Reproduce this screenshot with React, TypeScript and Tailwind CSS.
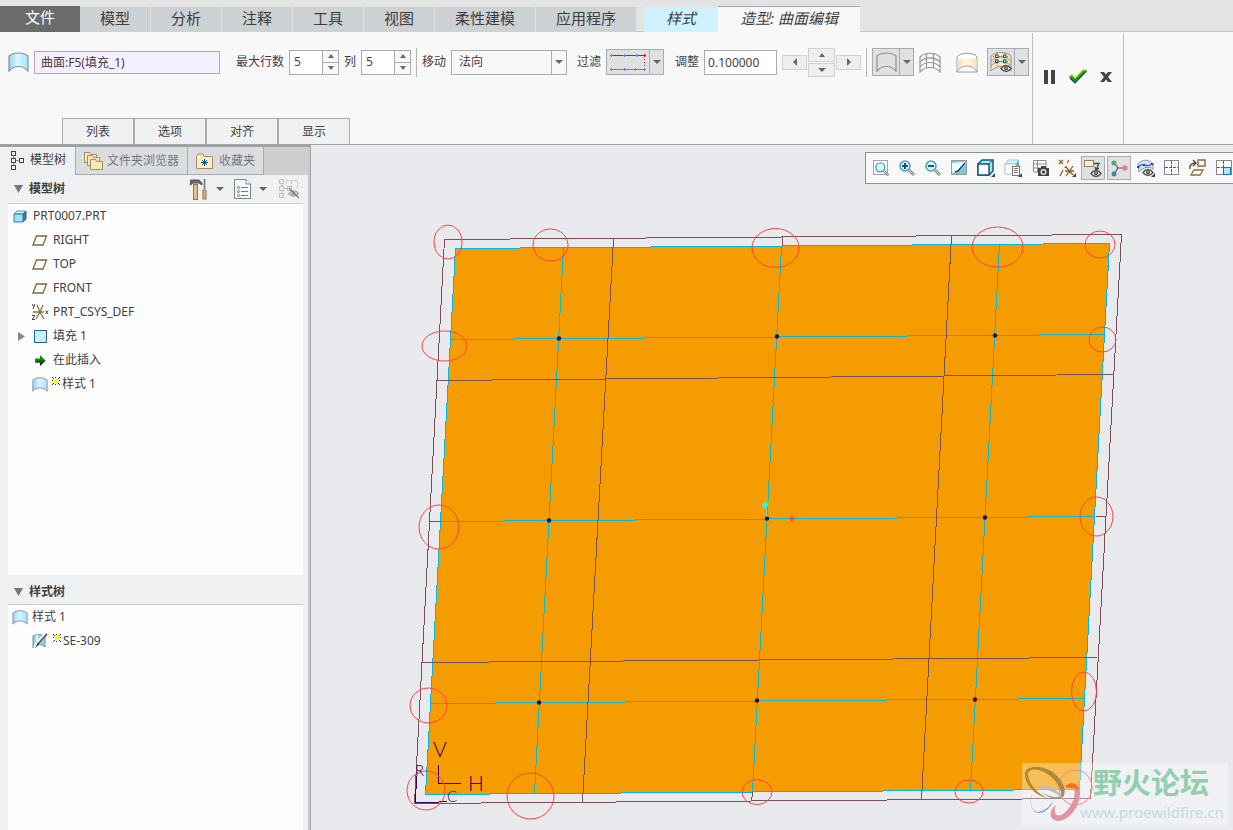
import React, { useState } from "react";

type IconProps = { className?: string };

const SurfaceIcon: React.FC<IconProps & { variant?: "blue" | "plain" }> = ({ className = "w-[21px] h-[20px]", variant = "blue" }) => (
  <svg viewBox="0 0 21 20" className={className}>
    <defs>
      <linearGradient id="surfaceBlue" x1="0" x2="1">
        <stop offset="0" stopColor="#8fd6f2" />
        <stop offset="0.45" stopColor="#d9f6ff" />
        <stop offset="1" stopColor="#a2e4fb" />
      </linearGradient>
    </defs>
    <path
      d="M1 4 C6 0 15 0 20 4 V19 C15 13 6 13 1 19 Z"
      fill={variant === "blue" ? "url(#surfaceBlue)" : "none"}
      stroke="#8b9196"
      strokeWidth="1.2"
    />
  </svg>
);

const MeshIcon: React.FC<IconProps> = ({ className = "w-[22px] h-[21px]" }) => (
  <svg viewBox="0 0 22 21" className={className} fill="none" stroke="#93979b" strokeWidth="1.2">
    <path d="M1 5 C6 0 16 0 21 5 V20 C16 14 6 14 1 20 Z" />
    <path d="M1 10 C6 4.500 16 4.500 21 10 M1 15 C6 9 16 9 21 15 M7.500 2 V16 M14.500 2 V16" />
  </svg>
);

const ShadedIcon = () => (
  <svg viewBox="0 0 22 21" className="w-[22px] h-[21px]">
    <defs>
      <linearGradient id="shaded" x1="0" x2="1">
        <stop offset="0" stopColor="#ffdcae" />
        <stop offset="0.4" stopColor="#fff6e8" />
        <stop offset="1" stopColor="#ffe0b5" />
      </linearGradient>
    </defs>
    <path d="M1 5 C4 0 18 0 21 5 V20 H1 Z" fill="#fff" stroke="#96999c" />
    <path d="M1.500 6 C6 7 16 7 20.500 6 V19 C16 12 6 12 1.500 19 Z" fill="url(#shaded)" />
    <path d="M1 20 C6 12 16 12 21 20" fill="none" stroke="#96999c" />
  </svg>
);

const Eye: React.FC<{ x: number; y: number }> = ({ x, y }) => (
  <g transform={`translate(${x} ${y})`}>
    <path d="M0 3.500 C3 -0.500 7 -0.500 10 3.500 C7 7.500 3 7.500 0 3.500 Z" fill="#eee" stroke="#555" strokeWidth="1.400" />
    <circle cx="5" cy="3.300" r="2" fill="#444" />
    <circle cx="5" cy="3" r="0.700" fill="#fff" />
  </g>
);

const ControlMeshIcon = () => (
  <svg viewBox="0 0 22 22" className="w-[22px] h-[22px]">
    <path d="M1 5 C6 0 16 0 21 5 V20 C16 14 6 14 1 20 Z" fill="#ffe3bb" stroke="#93979b" />
    <path d="M1 10 C6 4.500 16 4.500 21 10 M1 15 C6 9 16 9 21 15" fill="none" stroke="#93979b" />
    <path d="M7 2 V15 M15 2 V15 M3 5.500 H19 M3 10.500 H19" fill="none" stroke="#3a7d96" strokeDasharray="1 1" />
    {[[5.5, 4], [13.5, 4], [5.5, 9], [13.5, 9]].map(([x, y]) => (
      <rect key={`${x}-${y}`} x={x} y={y} width="2.500" height="2.500" fill="#c8f0ff" stroke="#0c5975" />
    ))}
    <Eye x={11} y={14} />
  </svg>
);

const FilterIcon = () => (
  <svg viewBox="0 0 38 18" className="w-[38px] h-[18px]" fill="none" shapeRendering="crispEdges">
    <path d="M2 2.500 H36" stroke="#f00" />
    <path d="M35.500 3 V17" stroke="#f00" strokeDasharray="1 2" />
    <path d="M2 16.500 H36" stroke="#6a78dc" />
    <path
      d="M1 2.500 h3 M2.500 1 v3 M14 2.500 h3 M15.500 1 v3 M26 2.500 h3 M27.500 1 v3 M1 16.500 h3 M2.500 15 v3 M14 16.500 h3 M15.500 15 v3 M25 16.500 h3 M26.500 15 v3 M34 16.500 h3 M35.500 15 v3"
      stroke="#6a78dc"
    />
    <path d="M34 2.500 h3 M35.500 1 v3" stroke="#f00" />
  </svg>
);

const Arrow: React.FC<{ dir: "up" | "down" | "left" | "right"; wide?: boolean }> = ({ dir, wide }) => {
  const paths = {
    up: "M1 6 L4 2 L7 6 Z",
    down: wide ? "M0 2 H8 L4 6 Z" : "M1 2 H7 L4 6 Z",
    left: "M6 0 V8 L2 4 Z",
    right: "M2 0 V8 L6 4 Z",
  };
  return (
    <svg viewBox="0 0 8 8" className="w-2 h-2 shrink-0">
      <path d={paths[dir]} fill="#666" />
    </svg>
  );
};

function Spinner({ label, id }: { label: string; id: string }) {
  const [value, setValue] = useState(5);
  return (
    <>
      <label htmlFor={id}>{label}</label>
      <div className="flex w-[50px] h-[25px] border border-[#a9abad] bg-white">
        <input
          id={id}
          className="w-0 grow pl-1 bg-white outline-none"
          value={value}
          onChange={(e) => setValue(Number(e.target.value) || 0)}
        />
        <div className="flex flex-col w-4 border-l border-[#a9abad] bg-[#f8f8f8]">
          <button aria-label={`${label} +`} className="flex-1 flex items-center justify-center border-b border-[#a9abad]" onClick={() => setValue(value + 1)}>
            <Arrow dir="up" />
          </button>
          <button aria-label={`${label} -`} className="flex-1 flex items-center justify-center" onClick={() => setValue(value - 1)}>
            <Arrow dir="down" />
          </button>
        </div>
      </div>
    </>
  );
}

function SplitButton({ label, children, className = "" }: { label: string; children: React.ReactNode; className?: string }) {
  return (
    <div className={`flex border border-[#a9abad] bg-[#dfe0e2] ${className}`}>
      <button aria-label={label} className="grow flex items-center justify-center">{children}</button>
      <button aria-label={`${label} ▾`} className="w-[14px] flex items-center justify-center border-l border-[#a9abad]">
        <Arrow dir="down" wide />
      </button>
    </div>
  );
}

const Separator = () => <div className="w-px h-[29px] bg-[#b5b7b9]" />;

const tabs = ["模型", "分析", "注释", "工具", "视图", "柔性建模", "应用程序"];
const panels = ["列表", "选项", "对齐", "显示"];

function TabBar() {
  return (
    <nav className="flex items-end h-8 shrink-0 bg-[#e3e3e3] text-[15px] leading-5 text-[#3d3d3d] [&_button]:pb-1">
      <button className="w-20 h-[26px] bg-[#6b6b6b] text-white">文件</button>
      <div className="flex gap-px">
        {tabs.map((tab) => (
          <button key={tab} className="h-[25px] px-5 bg-[#ccd1d4]">{tab}</button>
        ))}
      </div>
      <div className="w-2 h-px bg-[#c4c6c8]" />
      <button className="w-[74px] h-[25px] bg-[#d0f1ff] italic">样式</button>
      <button className="w-[142px] h-[26px] bg-[#f8f8f8] border-t border-[#a5a7a9] italic">造型: 曲面编辑</button>
      <div className="grow h-px bg-[#c4c6c8]" />
    </nav>
  );
}

function Ribbon() {
  return (
    <div className="flex shrink-0 h-[113px] bg-[#f8f8f8] border-b border-[#a0a2a2]">
      <div className="flex flex-col justify-between pt-[15px]">
        <div className="flex items-center gap-[5px] h-[30px] pl-2 pr-[3px] whitespace-nowrap">
          <SurfaceIcon />
          <input
            aria-label="曲面"
            className="w-[186px] h-[23px] px-[6px] mr-[11px] border border-[#a9abad] bg-[#f4f0ff] outline-none"
            defaultValue="曲面:F5(填充_1)"
          />
          <Spinner id="rows" label="最大行数" />
          <Spinner id="cols" label="列" />
          <Separator />
          <label htmlFor="move">移动</label>
          <div className="relative w-[116px] h-[25px] mr-[5px]">
            <select id="move" className="appearance-none w-full h-full pl-[7px] border border-[#a9abad] bg-[#f8f8f8] outline-none">
              <option>法向</option>
            </select>
            <div className="absolute right-px top-px bottom-px w-[15px] flex items-center justify-center border-l border-[#a9abad] pointer-events-none">
              <Arrow dir="down" wide />
            </div>
          </div>
          <span>过滤</span>
          <SplitButton label="过滤" className="w-[58px] h-[26px] mr-[6px]">
            <FilterIcon />
          </SplitButton>
          <label htmlFor="adjust">调整</label>
          <input id="adjust" className="w-[73px] h-[25px] pl-[3px] border border-[#a9abad] bg-white outline-none" defaultValue="0.100000" />
          <div className="flex items-center gap-px">
            <button aria-label="左" className="w-[25px] h-[15px] flex items-center justify-center border border-[#cfd1d2] bg-[#eceeef]"><Arrow dir="left" /></button>
            <div className="flex flex-col gap-px">
              <button aria-label="上" className="w-[27px] h-[14px] flex items-center justify-center border border-[#cfd1d2] bg-[#eceeef]"><Arrow dir="up" /></button>
              <button aria-label="下" className="w-[27px] h-[14px] flex items-center justify-center border border-[#cfd1d2] bg-[#eceeef]"><Arrow dir="down" wide /></button>
            </div>
            <button aria-label="右" className="w-[25px] h-[15px] flex items-center justify-center border border-[#cfd1d2] bg-[#eceeef]"><Arrow dir="right" /></button>
          </div>
          <Separator />
          <SplitButton label="曲面显示" className="w-[42px] h-[28px]">
            <SurfaceIcon variant="plain" />
          </SplitButton>
          <button aria-label="网格" className="mr-[10px]"><MeshIcon /></button>
          <button aria-label="着色" className="mr-1"><ShadedIcon /></button>
          <SplitButton label="控制网格" className="w-[42px] h-[28px]">
            <ControlMeshIcon />
          </SplitButton>
        </div>
        <div className="flex pl-[62px]">
          {panels.map((name) => (
            <button key={name} className="w-[72px] h-[26px] border border-b-0 border-[#a9abad] bg-[#eff1f3]">{name}</button>
          ))}
        </div>
      </div>
      <div className="flex items-center gap-3 mt-px px-[11px] pb-6 border-x border-[#bdbfc1]">
        <button aria-label="暂停">
          <svg viewBox="0 0 12 14" className="w-3 h-[14px]" fill="#444"><path d="M0 0 H4 V14 H0 Z M7 0 H11 V14 H7 Z" /></svg>
        </button>
        <button aria-label="确定">
          <svg viewBox="0 0 20 15" className="w-5 h-[15px]">
            <path d="M1 8 L4 6 L7 9 L15 1 H19 L7 14 Z" fill="#239050" />
            <path d="M1 7.500 L4 5.500 L7 9 L15 1 H19" fill="none" stroke="#b4ef00" strokeWidth="1.300" />
            <path d="M2 9 L7 14 L18.500 2" fill="none" stroke="#14532c" strokeWidth="1.200" />
          </svg>
        </button>
        <button aria-label="取消">
          <svg viewBox="0 0 12 10" className="w-3 h-[10px]"><path d="M0 0 H4 L6 2.500 L8 0 H12 L8 5 L12 10 H8 L6 7.500 L4 10 H0 L4 5 Z" fill="#444" /></svg>
        </button>
      </div>
    </div>
  );
}

const TreeTabIcon = () => (
  <svg viewBox="0 0 14 20" className="w-[14px] h-5" fill="none" stroke="#444" shapeRendering="crispEdges">
    <path d="M1.500 1.500 h4 v4 h-4 Z M1.500 8.500 h4 v4 h-4 Z M1.500 15.500 h4 v4 h-4 Z M9.500 8.500 h4 v4 h-4 Z" />
    <path d="M3.500 5 V8 M3.500 13 V15 M6 10.500 H9" stroke="#888" />
  </svg>
);

const folder = (x: number, y: number) => (
  <path key={x} d={`M${x} ${y} h5 l1 2 h6 v8 h-12 Z`} fill="#ffe7b5" stroke="#a48c68" />
);

const FoldersIcon = () => <svg viewBox="0 0 19 20" className="w-[19px] h-5">{[folder(0.5, 1.5), folder(3.5, 4.5), folder(6.5, 8.5)]}</svg>;

const FavoriteIcon = () => (
  <svg viewBox="0 0 17 16" className="w-[17px] h-4">
    <path d="M0.500 3.500 L2 1 H7 L8 3.500 H16.500 V15.500 H0.500 Z" fill="#ffebc0" stroke="#a48c68" />
    <path d="M8.500 6 V13 M5 9.500 H12 M6 7 L11 12 M11 7 L6 12" stroke="#0d587c" />
  </svg>
);

const PartIcon = () => (
  <svg viewBox="0 0 14 13" className="w-[14px] h-[13px]" strokeLinejoin="round">
    <path d="M1 4 L4 1 H13 L10 4 Z" fill="#cdf2fd" stroke="#5b9db8" />
    <path d="M10 4 L13 1 V9 L10 12 Z" fill="#2d83a8" stroke="#1e6a8c" />
    <path d="M1 4 H10 V12 H1 Z" fill="#99e5fb" stroke="#3d7890" />
  </svg>
);

const PlaneIcon = () => (
  <svg viewBox="0 0 16 11" className="w-4 h-[11px]"><path d="M4.500 1 H14.500 L11 10 H1 Z" fill="#fff" stroke="#80683f" strokeWidth="1.300" /></svg>
);

const CsysIcon = () => (
  <svg viewBox="0 0 17 16" className="w-[17px] h-4" fill="none">
    <path d="M1 8 H12 M5 1 L8 8 L12 15 M11 1 L8 8 L4 15" stroke="#8c7142" strokeWidth="1.300" />
    <path d="M0 0 L1.500 2.500 M3 0 L1 5 M0 11.500 H3 L0 15.500 H3 M13.500 6.500 L16 10 M16 6.500 L13.500 10" stroke="#444" />
  </svg>
);

const FillIcon = () => (
  <svg viewBox="0 0 13 13" className="w-[13px] h-[13px]">
    <rect x="0.500" y="0.500" width="12" height="12" fill="#b8edfc" stroke="#276b8a" />
    <path d="M2 6 L6 2 M2 10 L10 2 M4 11 L11 4 M8 11 L11 8" stroke="#fff" />
  </svg>
);

const InsertIcon = () => (
  <svg viewBox="0 0 11 11" className="w-[11px] h-[11px]">
    <path d="M0 3.500 H5 V0 L10.500 5.500 L5 11 V7.500 H0 Z" fill="#0a8f0a" />
    <path d="M0 7.500 H5 V11 L10.500 5.500 H3 Z" fill="#064f06" />
  </svg>
);

const NewMark = () => (
  <svg viewBox="0 0 8 8" className="w-2 h-2 mb-[6px]" shapeRendering="crispEdges">
    <path d="M0 0 h1 v1 h-1 Z M1 1 h1 v1 h-1 Z M6 1 h1 v1 h-1 Z M7 0 h1 v1 h-1 Z M3 0 h1 v1 h-1 Z M3 7 h1 v1 h-1 Z M0 3 h1 v1 h-1 Z M7 3 h1 v1 h-1 Z M1 6 h1 v1 h-1 Z M0 7 h1 v1 h-1 Z M6 6 h1 v1 h-1 Z M7 7 h1 v1 h-1 Z" fill="#333" />
    <rect x="2" y="2" width="4" height="4" fill="#ffff00" />
  </svg>
);

const SurfaceEditIcon = () => (
  <svg viewBox="0 0 17 16" className="w-[17px] h-4">
    <path d="M1 3 C5 1 10 1 13 4 V14 C9 10 5 11 1 15 Z" fill="#94d3e8" stroke="#5e95aa" />
    <path d="M5 2 V11" stroke="#e8fbff" strokeWidth="2" />
    <path d="M3 15 L7 9 L15 0" fill="none" stroke="#fff" strokeWidth="4" />
    <path d="M3 15 L6 9 L8 11 Z" fill="#444" />
    <path d="M7 10 L15 1" stroke="#6c6662" strokeWidth="2" />
  </svg>
);

const ToolsIcon = () => (
  <svg viewBox="0 0 18 21" className="w-[18px] h-[21px]">
    <path d="M0.500 1 H9 L12 4 V6 L9 4 H3 L0.500 6 Z" fill="#666c70" stroke="#555" />
    <rect x="3.500" y="5.500" width="4" height="15" fill="#e5bf88" stroke="#9b7340" />
    <path d="M14.500 0 V10" stroke="#777" strokeWidth="1.600" />
    <rect x="13" y="11" width="3" height="9" fill="#e4b368" stroke="#9b7340" />
  </svg>
);

const ListIcon = () => (
  <svg viewBox="0 0 17 20" className="w-[17px] h-5">
    <path d="M0.500 0.500 H12 L16.500 5 V19.500 H0.500 Z" fill="#f3f8fb" stroke="#7f868b" />
    <path d="M12 0.500 V5 H16.500" fill="#fff" stroke="#7f868b" />
    <path d="M7 8.500 H14 M7 12.500 H14 M7 16.500 H14" stroke="#777" />
    <g fill="none" stroke="#777"><circle cx="4.500" cy="8.500" r="1.100" /><circle cx="4.500" cy="12.500" r="1.100" /><circle cx="4.500" cy="16.500" r="1.100" /></g>
  </svg>
);

const HideTreeIcon = () => (
  <svg viewBox="0 0 21 20" className="w-[21px] h-5" fill="none">
    <path d="M0.500 0.500 h4 v4 h-4 Z M0.500 7.500 h4 v4 h-4 Z M0.500 14.500 h4 v4 h-4 Z M3 5 V8 M3 12 V14 M5 9.500 H8 M8.500 7.500 h4 v4 h-4 Z" stroke="#bcc0c2" />
    <path d="M7 1.500 H19 M7.500 2 V7 M12.500 2 V12 M18.500 2 V10" stroke="#c8cacc" strokeDasharray="3 1" />
    <path d="M10 14.500 C12.500 11 17 11 19.500 14.500 C17 18 12.500 18 10 14.500 Z" fill="#ddd" stroke="#a5a5a5" strokeWidth="1.300" />
    <circle cx="14.500" cy="14.500" r="1.800" fill="#999" />
    <path d="M10 9 L20 19" stroke="#777" strokeWidth="1.200" />
  </svg>
);

const SectionTitle: React.FC<{ title: string; children?: React.ReactNode; className?: string }> = ({ title, children, className = "" }) => (
  <div className={`flex items-center shrink-0 h-[29px] ml-2 mr-[5px] pl-[6px] pr-[3px] border-b border-[#cdd0d2] ${className}`}>
    <svg viewBox="0 0 9 8" className="w-[9px] h-2 mr-[6px]"><path d="M0 0 H9 L4.500 8 Z" fill="#777" /></svg>
    <h2 className="grow font-bold">{title}</h2>
    {children}
  </div>
);

const planes = ["RIGHT", "TOP", "FRONT"];

function Sidebar() {
  return (
    <aside className="flex flex-col w-[311px] shrink-0 pr-[2px] bg-[#c8cacc] border-r border-t-2 border-[#9fa1a2]">
      <div className="flex shrink-0 h-7 bg-[#cccecf]">
        <button className="flex items-center gap-[6px] pl-[10px] pb-[2px] w-[75px] bg-[#eef0f2] whitespace-nowrap"><TreeTabIcon />模型树</button>
        <button className="flex items-center gap-1 pl-2 w-[113px] border border-t-0 border-[#a9abad] bg-[#dadddf] text-[#777] whitespace-nowrap"><FoldersIcon />文件夹浏览器</button>
        <button className="flex items-center gap-[6px] pl-2 w-[76px] border border-t-0 border-l-0 border-[#a9abad] bg-[#dadddf] text-[#777] whitespace-nowrap"><FavoriteIcon />收藏夹</button>
      </div>
      <div className="flex flex-col grow bg-[#eef0f2]">
        <SectionTitle title="模型树">
          <button aria-label="设置" className="flex items-center gap-2"><ToolsIcon /><Arrow dir="down" wide /></button>
          <button aria-label="显示" className="flex items-center gap-2 ml-[10px]"><ListIcon /><Arrow dir="down" wide /></button>
          <button aria-label="隐藏" className="ml-3"><HideTreeIcon /></button>
        </SectionTitle>
        <ul className="h-[371px] ml-2 mr-[5px] bg-[#fdfdfd] [&>li]:flex [&>li]:items-center [&>li]:h-6">
          <li className="pl-[5px] gap-[6px]"><PartIcon />PRT0007.PRT</li>
          {planes.map((name) => (
            <li key={name} className="pl-6 gap-[5px]"><PlaneIcon />{name}</li>
          ))}
          <li className="pl-6 gap-1"><CsysIcon />PRT_CSYS_DEF</li>
          <li className="pl-[10px]">
            <svg viewBox="0 0 7 9" className="w-[7px] h-[9px] mr-[9px]"><path d="M0 0 L7 4.500 L0 9 Z" fill="#888" /></svg>
            <FillIcon /><span className="ml-[6px]">填充 1</span>
          </li>
          <li className="pl-[27px] gap-[7px]"><InsertIcon />在此插入</li>
          <li className="pl-6"><SurfaceIcon className="w-4 h-[15px] mr-1" /><NewMark /><span className="ml-[2px]">样式 1</span></li>
        </ul>
        <SectionTitle title="样式树" className="mt-px pt-[3px]" />
        <ul className="grow ml-2 mr-[5px] bg-[#fdfdfd] [&>li]:flex [&>li]:items-center [&>li]:h-6">
          <li className="pl-1 gap-1"><SurfaceIcon className="w-4 h-[15px]" />样式 1</li>
          <li className="pl-6"><SurfaceEditIcon /><span className="w-1" /><NewMark /><span className="ml-[2px]">SE-309</span></li>
        </ul>
      </div>
    </aside>
  );
}

const lens = (
  <>
    <path d="M11 11 L16 16" stroke="#888" strokeWidth="3" />
    <path d="M11 11 L16 16" stroke="#ddd" />
    <circle cx="7" cy="7" r="5" fill="#d9f6ff" stroke="#4b9bb8" strokeWidth="1.500" />
  </>
);

const corner = <path d="M18 18 V14 L14 18 Z" fill="#444" />;

const viewTools: { name: string; on?: boolean; wide?: boolean; art: React.ReactNode }[] = [
  { name: "重新调整", art: <><rect x="1.500" y="1.500" width="14" height="14" fill="#fff" stroke="#a3a3a3" /><g transform="translate(2 2) scale(.9)">{lens}</g></> },
  { name: "放大", art: <>{lens}<path d="M7 4 V10 M4 7 H10" stroke="#075b83" strokeWidth="2" /></> },
  { name: "缩小", art: <>{lens}<path d="M4 7 H10" stroke="#075b83" strokeWidth="2" /></> },
  {
    name: "重画",
    art: <><rect x="1.500" y="1.500" width="15" height="14" fill="#7cc8e0" stroke="#9a9a9a" /><path d="M2 4 C8 3 12 3 16 3 C14 9 9 12 2 14 Z" fill="#effbff" /><path d="M5 13 L8 12 L15 4" fill="none" stroke="#075478" strokeWidth="1.500" /></>,
  },
  {
    name: "显示样式",
    wide: true,
    art: <><path d="M1 5 L5 1 H16 V12 L12 16 H1 Z" fill="#a7e6f8" stroke="#12587a" strokeWidth="1.500" /><path d="M1 5 H12 V16 H1 Z" fill="#fff" stroke="#12587a" strokeWidth="1.500" /><path d="M12 5 L16 1" stroke="#12587a" />{corner}</>,
  },
  {
    name: "已保存方向",
    wide: true,
    art: <><path d="M1 5 L4 1 H15 L12 5 Z" fill="#c8f2ff" stroke="#9dcbdc" /><path d="M12 5 L15 1 V12 L12 15 Z" fill="#5faac7" /><path d="M1 5 H12 V15 H1 Z" fill="#fff" stroke="#bbb" /><rect x="8.500" y="7.500" width="7" height="9" fill="#fff" stroke="#777" /><path d="M10 9.500 H14 M10 11.500 H14 M10 13.500 H14" stroke="#777" />{corner}</>,
  },
  {
    name: "视图管理器",
    wide: true,
    art: <><path d="M2.500 1.500 H15 V13 H2.500 Z M2.500 5 H15 M2.500 9 H15 M6.500 1.500 V13" fill="#fff" stroke="#888" /><rect x="7" y="9" width="11" height="8" fill="#444" /><rect x="10" y="7" width="5" height="3" fill="#444" /><circle cx="12.500" cy="13" r="3" fill="#ddd" /><circle cx="12.500" cy="13" r="1.500" fill="#333" /></>,
  },
  {
    name: "基准显示",
    wide: true,
    art: <><path d="M1 1 L5 5 M5 1 L1 5 M11 1 L9 4 M8 7 L7 9 M5 11 L2 17 M7 12 H16 M8 8 L15 16 M15 7 L8 17" fill="none" stroke="#85652c" strokeWidth="1.300" />{corner}</>,
  },
  { name: "注释显示", on: true, art: <><rect x="0.500" y="1.500" width="9" height="6" fill="#fff2c8" stroke="#8f8368" /><path d="M10 4.500 H15 L12 11 M11 8 L12 11 L15 9" fill="none" stroke="#444" strokeWidth="1.300" /><Eye x={7} y={11} /></> },
  {
    name: "旋转中心",
    on: true,
    art: <><path d="M4 3 L8 9 L15 9 M8 9 L4 15" fill="none" stroke="#555" strokeWidth="1.200" /><circle cx="4" cy="4" r="2.500" fill="#52a86b" /><circle cx="15" cy="9" r="2.700" fill="#e98383" /><circle cx="4" cy="15" r="2.500" fill="#3d88b0" /></>,
  },
  {
    name: "曲面分析",
    wide: true,
    art: <><path d="M1 5 C5 0 12 0 16 5 V10 C12 7 6 8 2 13 Z" fill="#bdeefc" stroke="#8b9196" /><path d="M2 8 C5 2 9 10 15 5" fill="none" stroke="#8a35c7" strokeWidth="1.400" /><path d="M0 7 h2.500 v2 h-2.500 Z M6 5 h2 v2 h-2 Z M14 4 h2.500 v2 h-2.500 Z" fill="#0d5d84" /><Eye x={6} y={10} />{corner}</>,
  },
  { name: "活动平面", art: <><rect x="1.500" y="1.500" width="14" height="14" fill="#fff" stroke="#888" /><path d="M8.500 2 V15 M2 8.500 H15" stroke="#1b7196" strokeDasharray="3 1" /></> },
  { name: "重定向", art: <><rect x="9" y="1" width="7" height="6" fill="#fff" stroke="#8b6e3c" strokeWidth="1.500" /><path d="M5 11 H14 L11 16 H2 Z" fill="#fff" stroke="#8b6e3c" strokeWidth="1.300" /><path d="M1 10 C0 6 3 4 7 4 M4 1 L7 4 L4 7" fill="none" stroke="#444" strokeWidth="1.300" /></> },
  { name: "四视图", art: <><rect x="1.500" y="1.500" width="15" height="14" fill="#fff" stroke="#888" /><rect x="8.500" y="8.500" width="7" height="7" fill="#a8e8fc" stroke="#1b7196" /><path d="M8.500 2 V15 M2 8.500 H15" stroke="#1b7196" strokeDasharray="3 1" /></> },
];

const handles = [
  [559, 338], [777, 336], [995, 335],
  [549, 520], [767, 518], [985, 517],
  [539, 702], [757, 700], [975, 699],
];

// cx, cy, rx, ry
const marks = [
  [448, 242, 14, 17], [550.5, 245, 17.5, 16], [775.5, 248, 23.5, 19.5], [997.5, 247, 25.5, 20], [1100, 244.5, 15, 13.5],
  [444.5, 346, 22.5, 15], [1102.5, 339.5, 13.5, 12.5], [439, 527, 20, 22], [1096.5, 516.5, 16.5, 19.5], [428.5, 705.5, 18.5, 17.5],
  [1084, 691.5, 12.5, 19.5], [426, 790.5, 19, 19.5], [530.5, 796, 23.5, 23], [757, 792, 15, 12.5], [969, 791.5, 14, 11.5], [1075.5, 787.5, 16.5, 17.5],
];

const Model = () => (
  <svg viewBox="311 145 922 685" preserveAspectRatio="xMinYMin meet" className="block w-full h-full">
    <g fill="none" shapeRendering="crispEdges">
      <path d="M455.500 248.500 L1109.500 243.500 L1079.500 789.500 L425.500 794.500 Z" fill="#f59d00" stroke="#00b8e6" />
      <path
        d="M450.500 339.500 L1104.500 334.500 M440.500 521.500 L1094.500 516.500 M430.500 703.500 L1084.500 698.500 M563.500 247.500 L534.500 793.500 M781.500 246.500 L752.500 791.500 M999.500 244.500 L970.500 790.500"
        stroke="#08b8d8"
      />
      <path
        d="M444.500 239.500 L1121.500 234.500 L1090.500 798.500 L414.500 803.500 Z M613.500 238.500 L582.500 802.500 M951.500 235.500 L921.500 799.500 M436.500 380.500 L1113.500 374.500 M421.500 662.500 L1097.500 657.500 M782.500 236.500 V245.500 M752.500 792.500 L751.500 801.500 M428.500 521.500 H440.500 M1095.500 516.500 H1105.500"
        stroke="#7c4f57"
      />
      <path d="M438.500 764.500 V783.500 H461 M416.500 776.500 L415.500 802.500 H431 L447 801.500" stroke="#38005c" />
    </g>
    {handles.map(([x, y]) => (
      <circle key={`${x}-${y}`} cx={x} cy={y + 0.5} r="2.200" fill="#2b0a4d" />
    ))}
    <circle cx="768" cy="502" r="2" fill="#72d13c" />
    <circle cx="765" cy="505" r="2.800" fill="#3af3ee" />
    <path d="M766 505 L767 517" stroke="#3af3ee" />
    <circle cx="792" cy="518.500" r="2.500" fill="#ee4d35" fillOpacity="0.800" />
    <g fill="none" stroke="#ff4040">
      {marks.map(([cx, cy, rx, ry]) => (
        <ellipse key={`${cx}-${cy}`} cx={cx} cy={cy} rx={rx} ry={ry} />
      ))}
    </g>
    <g fill="#38005c" fontFamily="Lato, 'Liberation Sans', sans-serif" fontWeight="300">
      <text x="433" y="757" fontSize="21">V</text>
      <text x="468" y="791" fontSize="21">H</text>
      <text x="415" y="776" fontSize="15">R</text>
      <text x="447" y="802" fontSize="15">C</text>
    </g>
    <rect x="1022" y="763" width="206" height="62" fill="#fff" fillOpacity="0.350" />
    <g fillRule="evenodd">
      <path d="M1025 773 C1026 766 1039 764 1051 771 C1063 779 1068 791 1062 798 C1062 789 1056 779 1046 773 C1037 768 1028 768 1028 775 C1029 784 1037 793 1047 798 C1034 795 1024 783 1025 773 Z" fill="#b08a30" />
      <path d="M1050 771 C1061 778 1068 790 1063 797 C1058 802 1047 797 1041 792 C1050 797 1058 799 1061 795 C1063 788 1058 779 1050 771 Z" fill="#9c8a70" fillOpacity="0.850" />
      <path d="M1065 786 C1072 781 1080 783 1080 792 C1080 806 1071 819 1059 821 C1049 821 1048 811 1056 805 C1053 812 1056 817 1061 815 C1070 811 1077 796 1074 788 Z" fill="#dc8c92" fillOpacity="0.900" />
      <path d="M1065 787 C1069 781 1077 782 1079 790 C1074 787 1070 789 1065 787 Z" fill="#ee7419" />
      <path d="M1033 793 C1029 801 1031 811 1038 812 C1046 811 1051 804 1054 800 C1048 814 1036 817 1032 808 C1030 803 1030 798 1033 793 Z" fill="#a2abb5" />
      <path d="M1037 788 C1045 784 1057 787 1064 800 C1057 792 1047 789 1037 788 Z" fill="#b7bdc4" />
    </g>
    <text x="1093" y="794" fontSize="29" fontWeight="700" fill="#91cfae" fontFamily="'Noto Sans CJK SC', sans-serif">野火论坛</text>
    <text x="1080" y="818" fontSize="15" fill="#bddddd" fontFamily="'Noto Sans', sans-serif">www.proewildfire.cn</text>
  </svg>
);

export default function App() {
  return (
    <div className="flex flex-col h-screen overflow-hidden text-xs text-[#3f3f3f] font-['Noto_Sans','Noto_Sans_CJK_SC',sans-serif]">
      <TabBar />
      <Ribbon />
      <div className="flex grow min-h-0">
        <Sidebar />
        <main className="relative grow min-w-0 bg-[#e9eaee]">
          <Model />
          {/* Floating view toolbar */}
          <div className="absolute top-[7px] right-0 flex items-center gap-[2px] h-8 w-[368px] pl-[3px] overflow-hidden border border-r-0 border-[#8f9192] bg-[#f8f8f8]">
            {viewTools.map((tool) => (
              <button
                key={tool.name}
                aria-label={tool.name}
                className={`h-6 shrink-0 flex items-center justify-center border ${tool.wide ? "w-[25px]" : "w-6"} ${tool.on ? "border-[#a9abad] bg-[#dfe0e2]" : "border-transparent"}`}
              >
                <svg viewBox="0 0 18 18" className="w-[18px] h-[18px] shrink-0">{tool.art}</svg>
              </button>
            ))}
          </div>
        </main>
      </div>
    </div>
  );
}
